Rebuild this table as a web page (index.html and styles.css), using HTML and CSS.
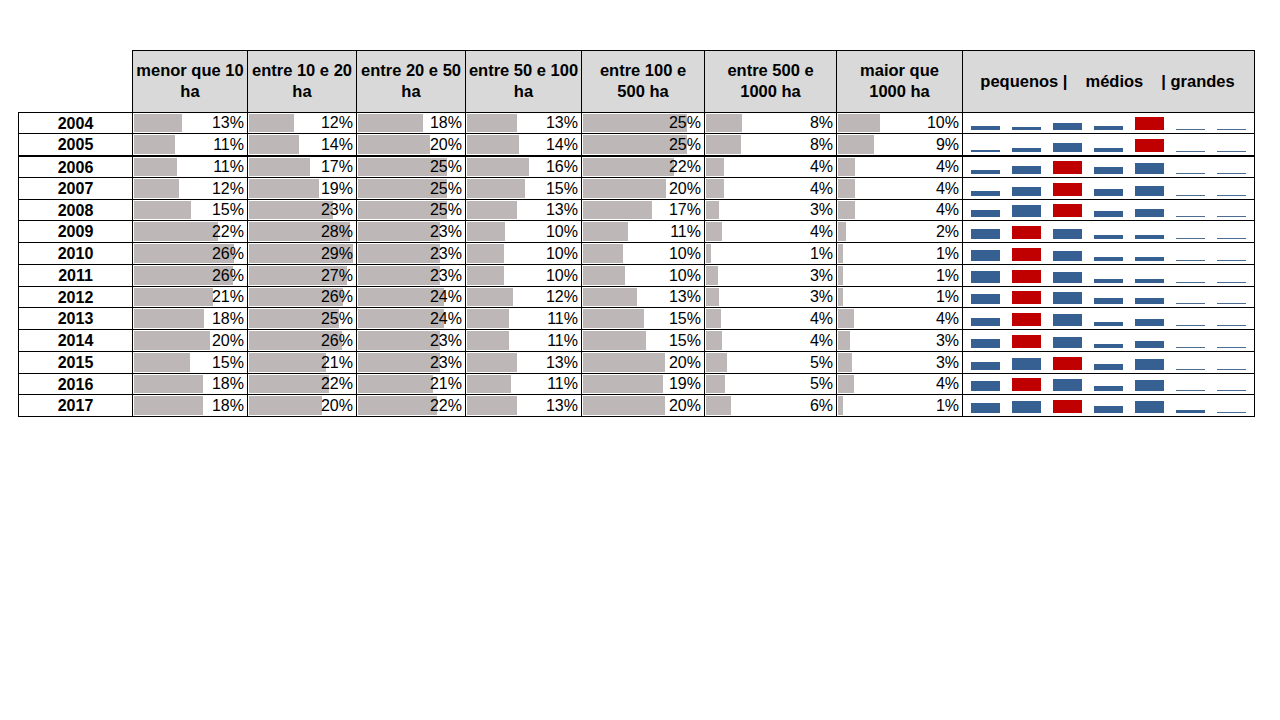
FILE: index.html
```html
<!DOCTYPE html>
<html lang="pt">
<head>
<meta charset="utf-8">
<title>Distribuição por tamanho</title>
<link rel="stylesheet" href="styles.css">
</head>
<body>
<div class="sheet">
  <div class="row head">
    <div class="corner"></div>
    <div class="hd">menor que 10<br>ha</div>
    <div class="hd">entre 10 e 20<br>ha</div>
    <div class="hd">entre 20 e 50<br>ha</div>
    <div class="hd">entre 50 e 100<br>ha</div>
    <div class="hd">entre 100 e<br>500 ha</div>
    <div class="hd">entre 500 e<br>1000 ha</div>
    <div class="hd">maior que<br>1000 ha</div>
    <div class="hd legend"><span>pequenos |</span><span>médios</span><span>| grandes</span></div>
  </div>

  <div class="row short">
    <div class="yr">2004</div>
    <div class="pct" style="--w:48px">13%</div>
    <div class="pct" style="--w:45px">12%</div>
    <div class="pct" style="--w:65px">18%</div>
    <div class="pct" style="--w:50px">13%</div>
    <div class="pct" style="--w:104px">25%</div>
    <div class="pct" style="--w:36px">8%</div>
    <div class="pct" style="--w:42px">10%</div>
    <div class="spark"><i style="--h:4px"></i><i style="--h:3px"></i><i style="--h:7px"></i><i style="--h:4px"></i><i class="max" style="--h:13px"></i><i class="flat"></i><i class="flat"></i></div>
  </div>
  <div class="row">
    <div class="yr">2005</div>
    <div class="pct" style="--w:41px">11%</div>
    <div class="pct" style="--w:50px">14%</div>
    <div class="pct" style="--w:72px">20%</div>
    <div class="pct" style="--w:52px">14%</div>
    <div class="pct" style="--w:104px">25%</div>
    <div class="pct" style="--w:35px">8%</div>
    <div class="pct" style="--w:36px">9%</div>
    <div class="spark"><i style="--h:2px"></i><i style="--h:4px"></i><i style="--h:9px"></i><i style="--h:4px"></i><i class="max" style="--h:13px"></i><i class="flat"></i><i class="flat"></i></div>
  </div>
  <div class="row thick">
    <div class="yr">2006</div>
    <div class="pct" style="--w:43px">11%</div>
    <div class="pct" style="--w:61px">17%</div>
    <div class="pct" style="--w:89px">25%</div>
    <div class="pct" style="--w:62px">16%</div>
    <div class="pct" style="--w:91px">22%</div>
    <div class="pct" style="--w:18px">4%</div>
    <div class="pct" style="--w:17px">4%</div>
    <div class="spark"><i style="--h:4px"></i><i style="--h:8px"></i><i class="max" style="--h:13px"></i><i style="--h:7px"></i><i style="--h:11px"></i><i class="flat"></i><i class="flat"></i></div>
  </div>
  <div class="row">
    <div class="yr">2007</div>
    <div class="pct" style="--w:45px">12%</div>
    <div class="pct" style="--w:70px">19%</div>
    <div class="pct" style="--w:89px">25%</div>
    <div class="pct" style="--w:58px">15%</div>
    <div class="pct" style="--w:83px">20%</div>
    <div class="pct" style="--w:18px">4%</div>
    <div class="pct" style="--w:17px">4%</div>
    <div class="spark"><i style="--h:5px"></i><i style="--h:9px"></i><i class="max" style="--h:13px"></i><i style="--h:7px"></i><i style="--h:10px"></i><i class="flat"></i><i class="flat"></i></div>
  </div>
  <div class="row short">
    <div class="yr">2008</div>
    <div class="pct" style="--w:57px">15%</div>
    <div class="pct" style="--w:84px">23%</div>
    <div class="pct" style="--w:89px">25%</div>
    <div class="pct" style="--w:50px">13%</div>
    <div class="pct" style="--w:69px">17%</div>
    <div class="pct" style="--w:13px">3%</div>
    <div class="pct" style="--w:17px">4%</div>
    <div class="spark"><i style="--h:7px"></i><i style="--h:12px"></i><i class="max" style="--h:13px"></i><i style="--h:6px"></i><i style="--h:8px"></i><i class="flat"></i><i class="flat"></i></div>
  </div>
  <div class="row">
    <div class="yr">2009</div>
    <div class="pct" style="--w:84px">22%</div>
    <div class="pct" style="--w:101px">28%</div>
    <div class="pct" style="--w:82px">23%</div>
    <div class="pct" style="--w:38px">10%</div>
    <div class="pct" style="--w:45px">11%</div>
    <div class="pct" style="--w:16px">4%</div>
    <div class="pct" style="--w:8px">2%</div>
    <div class="spark"><i style="--h:10px"></i><i class="max" style="--h:13px"></i><i style="--h:10px"></i><i style="--h:4px"></i><i style="--h:4px"></i><i class="flat"></i><i class="flat"></i></div>
  </div>
  <div class="row">
    <div class="yr">2010</div>
    <div class="pct" style="--w:100px">26%</div>
    <div class="pct" style="--w:104px">29%</div>
    <div class="pct" style="--w:82px">23%</div>
    <div class="pct" style="--w:37px">10%</div>
    <div class="pct" style="--w:40px">10%</div>
    <div class="pct" style="--w:5px">1%</div>
    <div class="pct" style="--w:5px">1%</div>
    <div class="spark"><i style="--h:11px"></i><i class="max" style="--h:13px"></i><i style="--h:10px"></i><i style="--h:4px"></i><i style="--h:4px"></i><i class="flat"></i><i class="flat"></i></div>
  </div>
  <div class="row">
    <div class="yr">2011</div>
    <div class="pct" style="--w:99px">26%</div>
    <div class="pct" style="--w:98px">27%</div>
    <div class="pct" style="--w:82px">23%</div>
    <div class="pct" style="--w:37px">10%</div>
    <div class="pct" style="--w:42px">10%</div>
    <div class="pct" style="--w:12px">3%</div>
    <div class="pct" style="--w:5px">1%</div>
    <div class="spark"><i style="--h:12px"></i><i class="max" style="--h:13px"></i><i style="--h:11px"></i><i style="--h:4px"></i><i style="--h:4px"></i><i class="flat"></i><i class="flat"></i></div>
  </div>
  <div class="row short">
    <div class="yr">2012</div>
    <div class="pct" style="--w:79px">21%</div>
    <div class="pct" style="--w:94px">26%</div>
    <div class="pct" style="--w:86px">24%</div>
    <div class="pct" style="--w:46px">12%</div>
    <div class="pct" style="--w:54px">13%</div>
    <div class="pct" style="--w:13px">3%</div>
    <div class="pct" style="--w:5px">1%</div>
    <div class="spark"><i style="--h:10px"></i><i class="max" style="--h:13px"></i><i style="--h:12px"></i><i style="--h:6px"></i><i style="--h:6px"></i><i class="flat"></i><i class="flat"></i></div>
  </div>
  <div class="row">
    <div class="yr">2013</div>
    <div class="pct" style="--w:70px">18%</div>
    <div class="pct" style="--w:90px">25%</div>
    <div class="pct" style="--w:86px">24%</div>
    <div class="pct" style="--w:42px">11%</div>
    <div class="pct" style="--w:61px">15%</div>
    <div class="pct" style="--w:15px">4%</div>
    <div class="pct" style="--w:16px">4%</div>
    <div class="spark"><i style="--h:8px"></i><i class="max" style="--h:13px"></i><i style="--h:12px"></i><i style="--h:4px"></i><i style="--h:7px"></i><i class="flat"></i><i class="flat"></i></div>
  </div>
  <div class="row">
    <div class="yr">2014</div>
    <div class="pct" style="--w:76px">20%</div>
    <div class="pct" style="--w:93px">26%</div>
    <div class="pct" style="--w:82px">23%</div>
    <div class="pct" style="--w:42px">11%</div>
    <div class="pct" style="--w:63px">15%</div>
    <div class="pct" style="--w:16px">4%</div>
    <div class="pct" style="--w:12px">3%</div>
    <div class="spark"><i style="--h:9px"></i><i class="max" style="--h:13px"></i><i style="--h:11px"></i><i style="--h:4px"></i><i style="--h:7px"></i><i class="flat"></i><i class="flat"></i></div>
  </div>
  <div class="row">
    <div class="yr">2015</div>
    <div class="pct" style="--w:56px">15%</div>
    <div class="pct" style="--w:77px">21%</div>
    <div class="pct" style="--w:82px">23%</div>
    <div class="pct" style="--w:50px">13%</div>
    <div class="pct" style="--w:82px">20%</div>
    <div class="pct" style="--w:21px">5%</div>
    <div class="pct" style="--w:14px">3%</div>
    <div class="spark"><i style="--h:8px"></i><i style="--h:12px"></i><i class="max" style="--h:13px"></i><i style="--h:6px"></i><i style="--h:11px"></i><i class="flat"></i><i class="flat"></i></div>
  </div>
  <div class="row short">
    <div class="yr">2016</div>
    <div class="pct" style="--w:69px">18%</div>
    <div class="pct" style="--w:80px">22%</div>
    <div class="pct" style="--w:75px">21%</div>
    <div class="pct" style="--w:44px">11%</div>
    <div class="pct" style="--w:80px">19%</div>
    <div class="pct" style="--w:19px">5%</div>
    <div class="pct" style="--w:16px">4%</div>
    <div class="spark"><i style="--h:10px"></i><i class="max" style="--h:13px"></i><i style="--h:12px"></i><i style="--h:5px"></i><i style="--h:11px"></i><i class="flat"></i><i class="flat"></i></div>
  </div>
  <div class="row last">
    <div class="yr">2017</div>
    <div class="pct" style="--w:69px">18%</div>
    <div class="pct" style="--w:73px">20%</div>
    <div class="pct" style="--w:79px">22%</div>
    <div class="pct" style="--w:50px">13%</div>
    <div class="pct" style="--w:82px">20%</div>
    <div class="pct" style="--w:25px">6%</div>
    <div class="pct" style="--w:5px">1%</div>
    <div class="spark"><i style="--h:10px"></i><i style="--h:12px"></i><i class="max" style="--h:13px"></i><i style="--h:7px"></i><i style="--h:12px"></i><i style="--h:3px"></i><i class="flat"></i></div>
  </div>
</div>
</body>
</html>
```

FILE: styles.css
```css
html, body {
  margin: 0;
  padding: 0;
  background: #ffffff;
}

body {
  font-family: "Liberation Sans", Arial, sans-serif;
  font-size: 16px;
  color: #000000;
}

.sheet {
  margin: 50px 0 0 18px;
  width: 1237px;
}

.row {
  display: grid;
  grid-template-columns: 114px 115px 109px 109px 116px 123px 132px 126px 293px;
  height: 22px;
}

.row.short {
  height: 21px;
}

.row.last {
  height: 23px;
}

.row > div {
  box-sizing: border-box;
  border-top: 1px solid #000;
  border-left: 1px solid #000;
}

.row > div:last-child {
  border-right: 1px solid #000;
}

.row.thick > div {
  border-top-width: 2px;
}

.row.last > div {
  border-bottom: 1px solid #000;
}

/* header */
.row.head {
  height: 62px;
}

.row.head > .corner {
  border: none;
  background: transparent;
}

.hd {
  background: #d9d9d9;
  font-weight: bold;
  font-size: 16.5px;
  line-height: 21px;
  text-align: center;
  display: flex;
  align-items: center;
  justify-content: center;
  padding-bottom: 1px;
}

.hd.legend {
  gap: 18px;
  white-space: nowrap;
  padding-right: 2px;
}

/* body */
.yr {
  font-weight: bold;
  text-align: center;
  display: flex;
  align-items: center;
  justify-content: center;
  line-height: 1;
  padding-top: 1px;
}

.pct {
  display: flex;
  align-items: center;
  justify-content: flex-end;
  padding-right: 3px;
  line-height: 1;
  background-image: linear-gradient(#bdb7b8, #bdb7b8);
  background-repeat: no-repeat;
  background-position: 1px 1px;
  background-size: var(--w) calc(100% - 2px);
}

.spark {
  display: flex;
  align-items: flex-end;
  gap: 12px;
  padding: 0 0 3px 8px;
}

.spark i {
  display: block;
  width: 29px;
  height: var(--h);
  background: #376092;
}

.spark i.max {
  background: #c00000;
}

.spark i.flat {
  height: 1px;
  background: #4a6d91;
}
```
